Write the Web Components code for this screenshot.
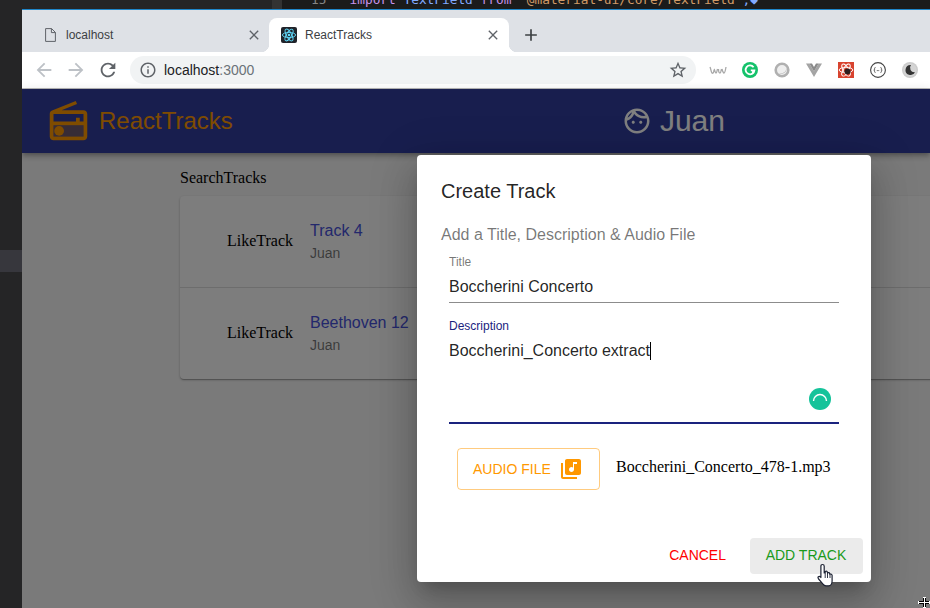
<!DOCTYPE html>
<html lang="en"><head><meta charset="utf-8"><title>ReactTracks</title>
<style>
html,body{margin:0;padding:0;width:930px;height:608px;overflow:hidden;background:#252526}
</style></head><body>
<x-desktop></x-desktop>
<script>
const P={
 back:'M20 11H7.83l5.59-5.59L12 4l-8 8 8 8 1.41-1.41L7.83 13H20v-2z',
 fwd:'M12 4l-1.41 1.41L16.17 11H4v2h12.17l-5.58 5.59L12 20l8-8z',
 reload:'M17.65 6.35C16.2 4.9 14.21 4 12 4c-4.42 0-7.99 3.58-7.99 8s3.57 8 7.99 8c3.73 0 6.84-2.55 7.73-6h-2.08c-.82 2.33-3.04 4-5.65 4-3.31 0-6-2.69-6-6s2.69-6 6-6c1.66 0 3.14.69 4.22 1.78L13 11h7V4l-2.35 2.35z',
 info:'M11 7h2v2h-2zm0 4h2v6h-2zm1-9C6.48 2 2 6.48 2 12s4.48 10 10 10 10-4.48 10-10S17.52 2 12 2zm0 18c-4.41 0-8-3.59-8-8s3.59-8 8-8 8 3.59 8 8-3.59 8-8 8z',
 star:'M22 9.24l-7.19-.62L12 2 9.19 8.63 2 9.24l5.46 4.73L5.82 21 12 17.27 18.18 21l-1.63-7.03L22 9.24zM12 15.4l-3.76 2.27 1-4.28-3.32-2.88 4.38-.38L12 6.1l1.71 4.04 4.38.38-3.32 2.88 1 4.28L12 15.4z',
 close:'M19 6.41L17.59 5 12 10.59 6.41 5 5 6.41 10.59 12 5 17.59 6.41 19 12 13.41 17.59 19 19 17.59 13.41 12z',
 plus:'M19 13h-6v6h-2v-6H5v-2h6V5h2v6h6v2z',
 radio:'M3.24 6.15C2.51 6.43 2 7.17 2 8v12c0 1.1.9 2 2 2h16c1.1 0 2-.9 2-2V8c0-1.1-.9-2-2-2H8.3l8.26-3.33L15.88 1 3.24 6.15zM20 8v4h-2v-2h-2v2H4V8h16zM4 20v-6h16v6H4z',
 face:'M10.25 13c0 .69-.56 1.25-1.25 1.25S7.75 13.69 7.75 13s.56-1.25 1.25-1.25 1.25.56 1.25 1.25zM15 11.75c-.69 0-1.25.56-1.25 1.25s.56 1.25 1.25 1.25 1.25-.56 1.25-1.25-.56-1.25-1.25-1.25zm7 .25c0 5.52-4.48 10-10 10S2 17.52 2 12 6.48 2 12 2s10 4.48 10 10zM10.66 4.12C12.06 6.44 14.6 8 17.5 8c.46 0 .91-.05 1.34-.12C17.44 5.56 14.9 4 12 4c-.46 0-.91.05-1.34.12zM4.42 9.47c1.71-.97 3.03-2.55 3.66-4.44C6.37 6 5.05 7.58 4.42 9.47zM20 12c0-.78-.12-1.53-.33-2.24-.7.15-1.42.24-2.17.24-3.13 0-5.92-1.44-7.76-3.69C8.69 8.87 6.6 10.88 4 11.86c.01.04 0 .09 0 .14 0 4.41 3.59 8 8 8s8-3.59 8-8z',
 lib:'M20 2H8c-1.1 0-2 .9-2 2v12c0 1.1.9 2 2 2h12c1.1 0 2-.9 2-2V4c0-1.1-.9-2-2-2zm-2 5h-3v5.5c0 1.38-1.12 2.5-2.5 2.5S10 13.88 10 12.5s1.12-2.5 2.5-2.5c.57 0 1.08.19 1.5.51V5h4v2zM4 6H2v14c0 1.1.9 2 2 2h14v-2H4V6z'
};
function def(name,css,html){
 customElements.define(name,class extends HTMLElement{
  constructor(){super();const s=this.attachShadow({mode:'open'});
   s.innerHTML='<style>'+css+'</style>'+(typeof html==='function'?'':html);}
  connectedCallback(){
   if(typeof html==='function'){this.shadowRoot.innerHTML='<style>'+css+'</style>'+html(this);}
  }
 });
}
const SANS='"Liberation Sans",Arial,sans-serif';
def('x-icon',':host{display:inline-flex;flex:none;width:var(--s,24px);height:var(--s,24px)}svg{width:100%;height:100%;display:block;fill:currentColor}',
 h=>`<svg viewBox="0 0 24 24"><path d="${P[h.getAttribute('n')]||''}"/></svg>`);

def('x-browser-tab',`:host{display:flex;align-items:center;box-sizing:border-box;height:34px;position:relative;font:12px/16px ${SANS};color:#3c4043;padding-bottom:1px}
 :host([active]){background:#fff;border-radius:8px 8px 0 0}
 :host([active])::before,:host([active])::after{content:"";position:absolute;bottom:0;width:8px;height:8px}
 :host([active])::before{left:-8px;background:radial-gradient(circle at 0 0,transparent 8px,#fff 8.5px)}
 :host([active])::after{right:-8px;background:radial-gradient(circle at 100% 0,transparent 8px,#fff 8.5px)}
 .ico{width:16px;height:16px;flex:none;display:flex;align-items:center;justify-content:center;margin-right:8px}
 .t{flex:1;white-space:nowrap}
 x-icon{--s:16px;color:#5f6368}`,
 `<span class="ico"><slot name="ico"></slot></span><span class="t"><slot></slot></span><x-icon n="close"></x-icon>`);

def('x-tab-strip',`:host{display:flex;align-items:flex-end;height:42px;background:#dee1e6;flex:none}
 x-browser-tab.a{width:247px;padding:0 7px 1px 20px}
 x-browser-tab.b{width:240px;padding:0 8px 1px 12px}
 .plus{margin-left:12px;height:34px;display:flex;align-items:center;color:#3c4043}
 x-icon{--s:20px}
 svg{display:block}`,
 `<x-browser-tab class="a"><svg slot="ico" width="11" height="14" viewBox="0 0 11 14"><path d="M.6.6h6L10.400 4.400V13.400H.6z M6.400.6V4.600h4" fill="none" stroke="#5f6368" stroke-width="1"/></svg>localhost</x-browser-tab>
  <x-browser-tab class="b" active><svg slot="ico" width="16" height="16" viewBox="0 0 16 16"><rect width="16" height="16" rx="2" fill="#20232a"/><g fill="none" stroke="#61dafb" stroke-width=".9"><ellipse cx="8" cy="8" rx="6.6" ry="2.6"/><ellipse cx="8" cy="8" rx="6.6" ry="2.6" transform="rotate(60 8 8)"/><ellipse cx="8" cy="8" rx="6.6" ry="2.6" transform="rotate(120 8 8)"/></g><circle cx="8" cy="8" r="1.3" fill="#61dafb"/></svg>ReactTracks</x-browser-tab>
  <span class="plus"><x-icon n="plus"></x-icon></span>`);

def('x-ext-icons',`:host{display:flex;align-items:center;margin-left:6px}
 span{width:32px;height:32px;display:flex;align-items:center;justify-content:center}
 svg{display:block}`,
 `<span><svg width="18" height="16" viewBox="0 0 18 16"><path d="M1 5c1 2 1 5 2 6s2-1 2-3M5 7c1 1 1 4 2 4s1-3 1.500-4M9.500 7c0 2 .5 4 1.500 4s1-3 1.500-4M13 7c.5 2 1 4 2 4s1.500-3 2-6" fill="none" stroke="#a8a8a8" stroke-width="1.300"/></svg></span>
  <span><svg width="16" height="16" viewBox="0 0 16 16"><circle cx="8" cy="8" r="8" fill="#15c26b"/><path d="M11.600 5.300A4.400 4.400 0 1 0 12.400 8.300H8.800" fill="none" stroke="#fff" stroke-width="1.800"/><path d="M11 8.300v3" stroke="#fff" stroke-width="1.800"/></svg></span>
  <span><svg width="16" height="16" viewBox="0 0 16 16"><circle cx="8" cy="8" r="6.300" fill="#eee" stroke="#b0b0b0" stroke-width="2.600"/><path d="M4 11a5.500 5.500 0 0 0 8.500-5.500A6 6 0 0 1 4 11z" fill="#b4b4b4"/></svg></span>
  <span><svg width="16" height="16" viewBox="0 0 16 16"><path d="M0 1.500h3.400L8 9.500l4.600-8H16L8 15z" fill="#a4a4a4"/><path d="M3.400 1.500h2.600L8 5l2-3.500h2.600L8 9.500z" fill="#8a8a8a"/></svg></span>
  <span><svg width="16" height="16" viewBox="0 0 16 16"><rect width="16" height="16" fill="#d8432f"/><g fill="none" stroke="#fff" stroke-width=".9"><ellipse cx="8" cy="8" rx="6.800" ry="2.700"/><ellipse cx="8" cy="8" rx="6.800" ry="2.700" transform="rotate(60 8 8)"/><ellipse cx="8" cy="8" rx="6.800" ry="2.700" transform="rotate(120 8 8)"/></g><circle cx="9.500" cy="9.500" r="3" fill="#2c1d1d"/></svg></span>
  <span><svg width="16" height="16" viewBox="0 0 16 16"><circle cx="8" cy="8" r="7.400" fill="#fff" stroke="#444" stroke-width="1.100"/><path d="M5.400 5.500c-1 0-.8 1-.8 1.500s0 1-.8 1.100c.8 0 .8.500.8 1s-.2 1.400.8 1.400M10.600 5.500c1 0 .8 1 .8 1.500s0 1 .8 1.100c-.8 0-.8.500-.8 1s.2 1.400-.8 1.400" fill="none" stroke="#444" stroke-width=".9"/><path d="M6.800 8.600h2.400" stroke="#444" stroke-width=".9" stroke-dasharray="1 .5"/></svg></span>
  <span><svg width="16" height="16" viewBox="0 0 16 16"><circle cx="8" cy="8" r="8" fill="#ccc"/><circle cx="8" cy="8" r="6.600" fill="#d4d4d4"/><path d="M9 3a5 5 0 1 0 4 7.200A4.400 4.400 0 0 1 9 3z" fill="#333"/></svg></span>`);

def('x-toolbar',`:host{display:flex;align-items:center;background:#fff;box-sizing:border-box;padding:0 0 0 6px;border-bottom:1px solid #b9b9b9;height:37px;flex:none}
 .nav{width:32px;display:flex;justify-content:center;color:#bdc1c6;--s:22px}
 .nav.r{color:#5f6368;margin-right:6px}
 .box{width:566px;height:28px;border-radius:14px;background:#f1f3f4;display:flex;align-items:center;box-sizing:border-box;padding:0 8px 0 9px;font:14px ${SANS};color:#202124}
 .box x-icon{--s:18px;color:#5f6368;margin-right:7px}
 .box .u{flex:1}
 .box i{font-style:normal;color:#6b7278}
 .box .st{margin:0;--s:20px}`,
 `<span class="nav"><x-icon n="back"></x-icon></span><span class="nav"><x-icon n="fwd"></x-icon></span><span class="nav r"><x-icon n="reload"></x-icon></span>
  <div class="box"><x-icon n="info"></x-icon><span class="u">localhost<i>:3000</i></span><x-icon class="st" n="star"></x-icon></div>
  <x-ext-icons></x-ext-icons>`);

def('x-app-bar',`:host{display:flex;align-items:center;justify-content:space-between;height:64px;background:#303d9d;box-sizing:border-box;padding:0 24px;flex:none;position:relative;box-shadow:0 2px 4px -1px rgba(0,0,0,.2),0 4px 5px rgba(0,0,0,.14),0 1px 10px rgba(0,0,0,.12);font-family:${SANS}}
 .l{display:flex;align-items:center;color:#ff9800}
 .l svg{width:45px;height:45px;display:block;fill:currentColor}
 .l span{font-size:24px;margin-left:8px}
 .u{display:flex;align-items:center;color:#fff;margin-right:181px}
 .u x-icon{--s:30px;margin-right:8px}
 .u span{font-size:30px}`,
 `<div class="l"><svg viewBox="0 0 24 24"><path opacity=".3" d="M4 14h16v6H4z"/><path d="${P.radio}"/><circle cx="7" cy="17" r="2.600"/></svg><span>ReactTracks</span></div>
  <div class="u"><x-icon n="face"></x-icon><span>Juan</span></div>`);

def('x-track-row',`:host{display:flex;align-items:center;height:91px;box-sizing:border-box;padding-left:47px;font-family:${SANS}}
 :host([divider]){height:92px;border-bottom:1px solid rgba(0,0,0,.12)}
 .like{font:16px "Liberation Serif",serif;color:#000;margin:-2px 16px 0 0;width:67px;white-space:nowrap}
 .t{font-size:16px;line-height:24px;color:#4650d8;margin-top:-1px;white-space:nowrap}
 .s{font-size:14px;line-height:20px;color:rgba(0,0,0,.54)}`,
 h=>`<span class="like">LikeTrack</span><div><div class="t">${h.getAttribute('title-text')}</div><div class="s">${h.getAttribute('by')}</div></div>`);

def('x-track-page',`:host{display:block;flex:1;background:#f5f5f5;padding:16px 0 0 158px;min-height:0;overflow:hidden}
 .h{font:16px/18px "Liberation Serif",serif;color:#000;margin-bottom:9px}
 .card{background:#fafafa;width:800px;border-radius:4px;box-shadow:0 1px 3px rgba(0,0,0,.2),0 1px 1px rgba(0,0,0,.14),0 2px 1px -1px rgba(0,0,0,.12)}`,
 `<div class="h">SearchTracks</div><div class="card"><x-track-row divider title-text="Track 4" by="Juan"></x-track-row><x-track-row title-text="Beethoven 12" by="Juan"></x-track-row></div>`);

def('x-text-field',`:host{display:block;position:relative;font-family:${SANS}}
 label{display:block;font-size:12px;line-height:14px;color:rgba(0,0,0,.54)}
 :host([focused]) label{color:#1a237e}
 .v{font-size:16px;line-height:24px;color:rgba(0,0,0,.87);margin-top:6px;padding-bottom:3px;height:var(--h,24px);border-bottom:1px solid #8c8c8c}
 :host([focused]) .v{border-bottom:2px solid #1a237e}
 .caret{display:inline-block;width:1px;height:18px;background:#000;vertical-align:-4px}
 slot{display:block}`,
 h=>`<label>${h.getAttribute('label')}</label><div class="v">${h.getAttribute('value')}${h.hasAttribute('focused')?'<span class="caret"></span>':''}<slot></slot></div>`);

def('x-dialog',`:host{width:454px;height:427px;box-sizing:border-box;background:#fff;border-radius:4px;padding:20px 32px 8px 24px;font-family:${SANS};position:relative;display:flex;flex-direction:column;
  box-shadow:0 11px 15px -7px rgba(0,0,0,.2),0 24px 38px 3px rgba(0,0,0,.14),0 9px 46px 8px rgba(0,0,0,.12)}
 h2{margin:0;font-weight:400;font-size:20px;line-height:32px;color:rgba(0,0,0,.87)}
 p{margin:15px 0 0;font-size:16px;line-height:24px;color:rgba(0,0,0,.54);padding-top:1px;height:23px}
 .fields{margin:9px 0 0 8px;display:flex;flex-direction:column;gap:16px}
 .gm{position:absolute;right:8px;bottom:14px;width:22px;height:22px;display:block}
 .file{display:flex;align-items:center;margin:24px 0 0 16px}
 .btn{display:flex;align-items:center;box-sizing:border-box;height:42px;width:143px;padding:0 15px 1px;border:1px solid rgba(255,152,0,.5);border-radius:4px;color:#ff9800;font-size:14px;flex:none;white-space:nowrap}
 .btn x-icon{margin-left:8px}
 .fn{font:16px "Liberation Serif",serif;color:#000;margin-left:16px;white-space:nowrap;margin-top:-5px}
 .acts{margin-top:auto;display:flex;justify-content:flex-end;align-items:center;margin-right:-24px;gap:8px;font-size:14px}
 .b{height:36px;display:flex;align-items:center;padding:0 16px 2px;border-radius:4px;box-sizing:border-box}
 .c{color:#f00}
 .a{color:#1a9a1a;background:#ebebeb;width:113px;justify-content:center;padding:0 1px 2px 0}`,
 `<h2>Create Track</h2><p>Add a Title, Description &amp; Audio File</p>
 <div class="fields">
  <x-text-field label="Title" value="Boccherini Concerto"></x-text-field>
  <x-text-field style="--h:80px" focused label="Description" value="Boccherini_Concerto extract">
   <svg class="gm" viewBox="0 0 22 22"><circle cx="11" cy="11" r="11" fill="#15c39a"/><path d="M4.500 13A6.500 6.500 0 0 1 17.500 13" fill="none" stroke="#fff" stroke-width="1.400"/></svg>
  </x-text-field>
 </div>
 <div class="file"><div class="btn">AUDIO FILE<x-icon n="lib"></x-icon></div><span class="fn">Boccherini_Concerto_478-1.mp3</span></div>
 <div class="acts"><div class="b c">CANCEL</div><div class="b a">ADD TRACK</div></div>`);

def('x-scrim',`:host{position:absolute;inset:0;background:rgba(0,0,0,.5);box-sizing:border-box;padding:66px 0 0 395px;display:block}`,
 `<x-dialog></x-dialog>`);

def('x-browser',`:host{display:flex;flex-direction:column;position:relative;overflow:hidden;border-top:1px solid #1f86c9;min-height:0}
 .content{flex:1;display:flex;flex-direction:column;position:relative;min-height:0}`,
 `<x-tab-strip></x-tab-strip><x-toolbar></x-toolbar>
  <div class="content"><x-app-bar></x-app-bar><x-track-page></x-track-page><x-scrim></x-scrim></div>`);

def('x-desktop',`:host{display:grid;grid-template-columns:22px 1fr;grid-template-rows:9px 1fr;width:930px;height:608px;position:relative;overflow:hidden;background:#252526}
 .top{grid-column:1/3;display:flex;overflow:hidden;height:9px}
 .g1{width:272px;background:#252526;flex:none}.g2{width:10px;background:#333;flex:none}
 .code{flex:1;background:#1b1b1b;display:flex;align-items:flex-end;overflow:hidden}
 .code span{display:block;font:12.800px/13px "DejaVu Sans Mono","Liberation Mono",monospace;white-space:pre;padding:0 0 3px 29px;color:#858585}
 .code b{font-weight:400;color:#c792ea}.code u{text-decoration:none;color:#82aaff}.code s{text-decoration:none;color:#d19a66}
 .side{background:#252526;padding-top:241px;box-sizing:border-box}
 .side div{height:22px;background:#37373d}
 .hand,.cross{position:absolute;display:block}
 .hand{left:817px;top:563px}
 .cross{left:918px;top:597px}`,
 `<div class="top"><div class="g1"></div><div class="g2"></div><div class="code"><span>15   <b>import</b> <u>TextField</u> <b>from</b> <s>"@material-ui/core/TextField"</s><u>;◆</u></span></div></div>
  <div class="side"><div></div></div><x-browser></x-browser>
  <svg class="hand" width="19" height="24" viewBox="0 0 19 24"><path d="M5.500 1.500c1 0 1.700.7 1.700 1.700V10l1-.3V8.500c1.300-.6 2-.2 2.200.8l.1.600c1.200-.6 2-.2 2.200.7l.1.600c1.300-.5 2.200 0 2.300 1.200V18c0 2.500-1.500 4.800-3.500 4.800H9c-1.300 0-2.200-.6-3-1.700L1.600 16c-.7-1-.8-1.800-.2-2.300.7-.6 1.600-.3 2.300.5l.2.300V3.200c0-1 .6-1.700 1.600-1.700z" fill="#fff" stroke="#1d2233" stroke-width="1.200" stroke-linejoin="round"/><path d="M8.200 10v5M10.500 10v5M13 11v4" stroke="#1d2233" stroke-width=".9"/></svg>
  <svg class="cross" width="12" height="11" viewBox="0 0 12 11" shape-rendering="crispEdges"><path d="M6 0v11M0 5.500h12" stroke="#fff" stroke-width="3"/><path d="M5 1v9M7 1v9M1 4.500h10M1 6.500h10" stroke="#000" stroke-width="1"/><path d="M6 3v5M3 5.500h6" stroke="#fff" stroke-width="1"/></svg>`);
</script>
</body></html>
